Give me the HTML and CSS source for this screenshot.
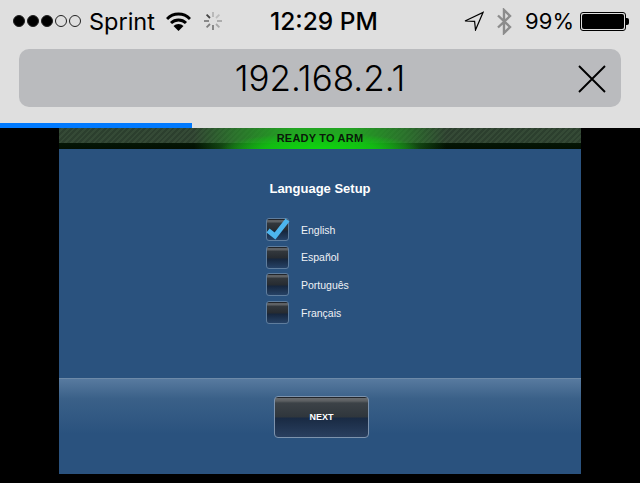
FILE: index.html
```html
<!DOCTYPE html>
<html lang="en">
<head>
    <meta charset="UTF-8">
    <meta name="viewport" content="width=device-width, initial-scale=1.0">
    <title>Language Setup</title>
    <link rel="stylesheet" href="styles.css">
</head>
<body>
    <div class="browser-bar">
        <div class="status-bar">
            <div class="status-left">
                <div class="signal">
                    <span class="dot on"></span><span class="dot on"></span><span class="dot on"></span><span class="dot"></span><span class="dot"></span>
                </div>
                <span class="carrier">Sprint</span>
                <svg class="wifi" width="25" height="19" viewBox="0 0 25 19">
                    <path d="M1 7 A16 16 0 0 1 24 7" fill="none" stroke="#000" stroke-width="3"/>
                    <path d="M5 11 A11 11 0 0 1 20 11" fill="none" stroke="#000" stroke-width="3"/>
                    <path d="M7.5 14 L12.5 19 L17.5 14 A7 7 0 0 0 7.5 14 Z" fill="#000"/>
                </svg>
                <svg class="spinner" width="20" height="20" viewBox="0 0 20 20" stroke="#7e7e7e" stroke-width="1.8">
                    <path d="M10 1 V6" stroke="#b5b5b5"/><path d="M10 14 V19"/>
                    <path d="M1 10 H6"/><path d="M14 10 H19" stroke="#a8a8a8"/>
                    <path d="M3.6 3.6 L7 7" stroke="#444"/><path d="M16.4 3.6 L13 7" stroke="#bdbdbd"/>
                    <path d="M3.6 16.4 L7 13"/><path d="M16.4 16.4 L13 13" stroke="#a8a8a8"/>
                </svg>
            </div>
            <div class="clock">12:29 PM</div>
            <div class="status-right">
                <svg width="20" height="20" viewBox="0 0 20 20">
                    <path d="M1 10 L19 1.5 L11.5 19 L10.6 10.4 Z" fill="none" stroke="#000" stroke-width="1.2"/>
                </svg>
                <svg class="bluetooth" width="16" height="27" viewBox="0 0 16 27">
                    <path d="M2 7.5 L14 19 L8 25 V2 L14 8 L2 19.5" fill="none" stroke="#8c8c8c" stroke-width="2.4"/>
                </svg>
                <span class="battery-text">99%</span>
                <div class="battery">
                    <div class="battery-body"><div class="battery-fill"></div></div>
                    <div class="battery-tip"></div>
                </div>
            </div>
        </div>
        <div class="url-bar">
            <span class="url">192.168.2.1</span>
            <svg class="stop" width="28" height="28" viewBox="0 0 28 28">
                <path d="M1 1 L27 27 M27 1 L1 27" stroke="#000" stroke-width="1.9" fill="none"/>
            </svg>
        </div>
        <div class="progress"><div class="progress-fill"></div></div>
    </div>

    <div class="page">
        <div class="panel">
            <div class="arm-strip">
                <div class="arm-glow"></div>
                <div class="arm-label">READY TO ARM</div>
            </div>
            <div class="setup">
                <h1>Language Setup</h1>
                <ul class="languages">
                    <li class="language">
                        <span class="check">
                            <svg class="tick" width="26" height="24" viewBox="0 0 26 24">
                                <path d="M3 14.5 L10 20 L22.5 4" fill="none" stroke="#4db5ee" stroke-width="5"/>
                            </svg>
                        </span>
                        English
                    </li>
                    <li class="language"><span class="check"></span>Español</li>
                    <li class="language"><span class="check"></span>Português</li>
                    <li class="language"><span class="check"></span>Français</li>
                </ul>
            </div>
            <div class="footer">
                <button class="next">NEXT</button>
            </div>
        </div>
    </div>
</body>
</html>
```

FILE: styles.css
```css
* {
    box-sizing: border-box;
}

body {
    margin: 0;
    background-color: #000;
    font-family: "Liberation Sans", Arial, sans-serif;
    height: 483px;
    overflow: hidden;
}

.browser-bar {
    height: 128px;
    background-color: #dfdfdf;
    display: flex;
    flex-direction: column;
    font-family: Inter, "Liberation Sans", sans-serif;
    color: #000;
}

.status-bar {
    height: 49px;
    display: flex;
    align-items: center;
    padding: 0 11px 7px 13px;
}

.status-left {
    width: 257px;
    display: flex;
    align-items: center;
}

.status-right {
    flex: 1;
    display: flex;
    align-items: center;
    justify-content: flex-end;
}

.signal {
    display: flex;
    gap: 2px;
}

.dot {
    width: 12px;
    height: 12px;
    border-radius: 50%;
    border: 1px solid #222;
}

.dot.on {
    background-color: #000;
}

.carrier {
    margin-left: 8px;
    font-size: 23.5px;
    font-weight: 400;
}

.wifi {
    margin-left: 11px;
}

.spinner {
    margin-left: 12px;
}

.clock {
    font-size: 24.5px;
    font-weight: 500;
    white-space: nowrap;
}

.bluetooth {
    margin-left: 12px;
}

.battery-text {
    margin-left: 13px;
    font-size: 22px;
}

.battery {
    margin-left: 6px;
    display: flex;
    align-items: center;
}

.battery-body {
    width: 46px;
    height: 19px;
    border: 1px solid #000;
    border-radius: 3px;
    padding: 1px;
}

.battery-fill {
    height: 100%;
    background-color: #000;
    border-radius: 2px;
}

.battery-tip {
    width: 3px;
    height: 7px;
    background-color: #000;
    border-radius: 0 2px 2px 0;
}

.url-bar {
    height: 58px;
    margin: 0 19px;
    background-color: #babbbe;
    border-radius: 10px;
    display: flex;
    align-items: center;
    justify-content: center;
    position: relative;
}

.url {
    font-size: 35px;
    font-weight: 350;
}

.stop {
    position: absolute;
    right: 15px;
    top: 16px;
}

.progress {
    margin-top: auto;
    height: 5px;
}

.progress-fill {
    width: 192px;
    height: 100%;
    background-color: #007aff;
}

.page {
    display: flex;
    justify-content: center;
}

.panel {
    width: 522px;
    height: 346px;
    display: flex;
    flex-direction: column;
    background-color: #2a527e;
    color: #fff;
}

.arm-strip {
    height: 21px;
    position: relative;
    background:
        linear-gradient(to bottom, transparent 15px, #051605 15px, #031003 21px),
        repeating-linear-gradient(135deg, #2c3f2e 0, #2c3f2e 2px, #354a36 2px, #354a36 4px);
}

.arm-glow {
    position: absolute;
    inset: 0;
    background:
        radial-gradient(ellipse 100px 16px at 50% 100%, #0fd40f 0%, rgba(15, 200, 15, 0.8) 55%, rgba(15, 200, 15, 0) 100%),
        linear-gradient(to right, rgba(40, 150, 40, 0) 135px, rgba(40, 150, 40, 0.55) 175px, #22a522 235px, #22a522 287px, rgba(40, 150, 40, 0.55) 347px, rgba(40, 150, 40, 0) 387px);
}

.arm-label {
    position: relative;
    text-align: center;
    font-size: 11px;
    font-weight: bold;
    letter-spacing: 0.2px;
    line-height: 20px;
    color: #0a1a0a;
}

.setup {
    flex: 1;
    display: flex;
    flex-direction: column;
    align-items: center;
}

h1 {
    margin: 32px 0 0;
    font-size: 13px;
    line-height: 16px;
    font-weight: bold;
}

.languages {
    list-style: none;
    margin: 21px 0 0;
    padding: 0;
    width: 108px;
    display: flex;
    flex-direction: column;
    gap: 4.7px;
}

.language {
    height: 23px;
    display: flex;
    align-items: center;
    gap: 12px;
    font-size: 10.5px;
    color: #eef1f5;
}

.check {
    width: 23px;
    height: 23px;
    flex-shrink: 0;
    position: relative;
    border: 1px solid #5f7d9d;
    border-radius: 3px;
    background: linear-gradient(to bottom, #22252a 0, #22252a 1px, #5e6164 1px, #5e6164 3px, #33383d 4px, #262b31 11px, #16263d 12px, #264266 100%);
}

.tick {
    position: absolute;
    left: -2px;
    top: -3px;
}

.footer {
    height: 96px;
    display: flex;
    justify-content: center;
    padding-top: 17px;
    border-top: 1px solid #6d8aa8;
    background: linear-gradient(to bottom, #587a9f 0, #3a6088 20px, #2a527e 55px);
}

.next {
    width: 95px;
    height: 42px;
    margin-left: 3px;
    padding: 0;
    border: 1px solid #7d93ad;
    border-radius: 4px;
    background: linear-gradient(to bottom, #22252a 0, #22252a 1px, #686b6d 1px, #5c5f62 4px, #3c4247 6px, #2f363c 20px, #192a43 21px, #293f5f 100%);
    color: #fff;
    font-family: "Liberation Sans", Arial, sans-serif;
    font-size: 9px;
    font-weight: bold;
}
```
